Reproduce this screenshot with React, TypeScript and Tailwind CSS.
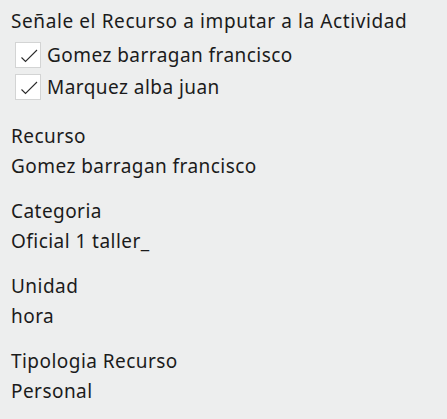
const people = ["Gomez barragan francisco", "Marquez alba juan"];

const fields = [
  { label: "Recurso", value: "Gomez barragan francisco" },
  { label: "Categoria", value: "Oficial 1 taller_" },
  { label: "Unidad", value: "hora" },
  { label: "Tipologia Recurso", value: "Personal" },
];

function CheckRow({ name }: { name: string }) {
  return (
    <label className="flex h-[32px] items-center gap-[6px] pl-1">
      <span className="grid h-[26px] w-[26px] place-items-center border border-[#d3d4d4] bg-white">
        <svg width="24" height="24" viewBox="0 0 24 24" fill="none">
          <path d="M5.5 14.5 L9.5 18.5 L21 7" stroke="#2a2a2a" strokeWidth="1.1" />
        </svg>
      </span>
      <span>{name}</span>
    </label>
  );
}

export default function App() {
  return (
    <div className="min-h-[419px] bg-[#edeeee] px-[11px] pt-[6px] font-['Noto_Sans',sans-serif] text-[19px] leading-[30px] tracking-[0.45px] text-[#1b1b1b]">
      <h1 className="tracking-[0.6px]">Señale el Recurso a imputar a la Actividad</h1>
      <div className="mt-[3px]">
        {people.map((p) => (
          <CheckRow key={p} name={p} />
        ))}
      </div>
      <div className="mt-[18px] flex flex-col gap-[15px]">
        {fields.map((f) => (
          <div key={f.label}>
            <p>{f.label}</p>
            <p>{f.value}</p>
          </div>
        ))}
      </div>
    </div>
  );
}
